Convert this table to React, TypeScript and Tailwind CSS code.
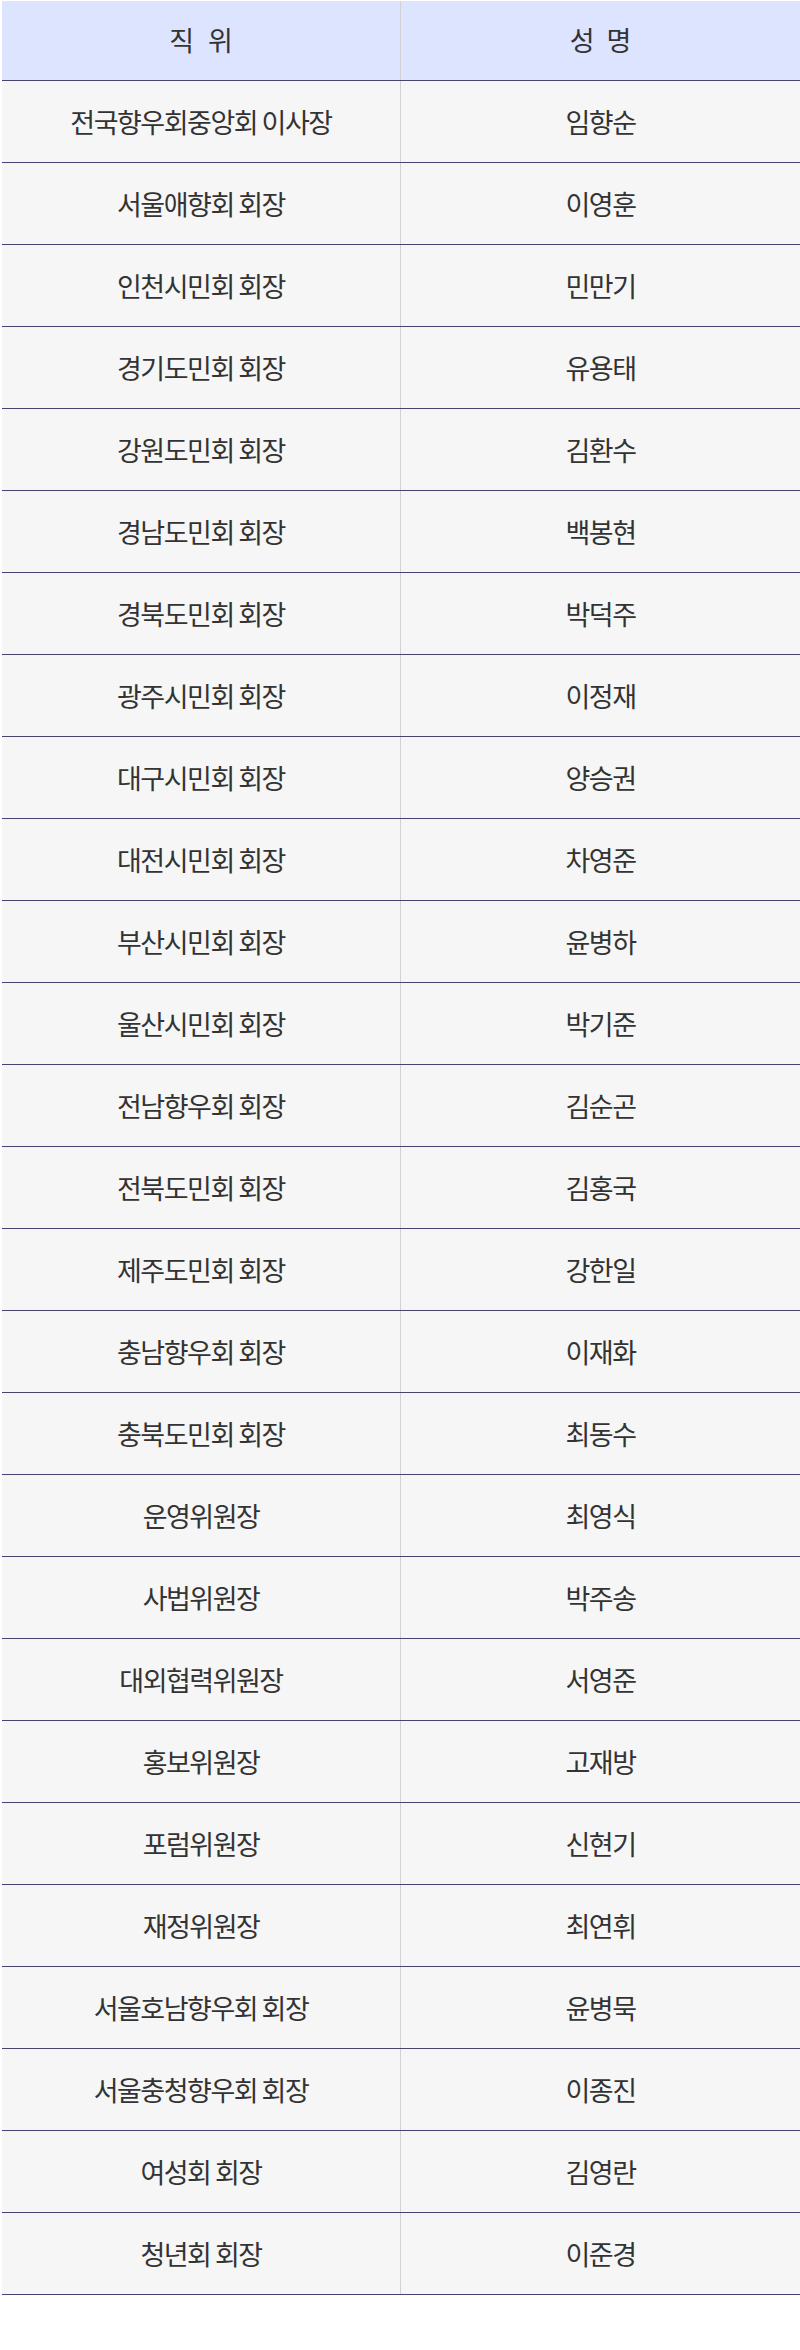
import React from "react";

const rows: [string, string][] = [
  ["전국향우회중앙회 이사장", "임향순"],
  ["서울애향회 회장", "이영훈"],
  ["인천시민회 회장", "민만기"],
  ["경기도민회 회장", "유용태"],
  ["강원도민회 회장", "김환수"],
  ["경남도민회 회장", "백봉현"],
  ["경북도민회 회장", "박덕주"],
  ["광주시민회 회장", "이정재"],
  ["대구시민회 회장", "양승권"],
  ["대전시민회 회장", "차영준"],
  ["부산시민회 회장", "윤병하"],
  ["울산시민회 회장", "박기준"],
  ["전남향우회 회장", "김순곤"],
  ["전북도민회 회장", "김홍국"],
  ["제주도민회 회장", "강한일"],
  ["충남향우회 회장", "이재화"],
  ["충북도민회 회장", "최동수"],
  ["운영위원장", "최영식"],
  ["사법위원장", "박주송"],
  ["대외협력위원장", "서영준"],
  ["홍보위원장", "고재방"],
  ["포럼위원장", "신현기"],
  ["재정위원장", "최연휘"],
  ["서울호남향우회 회장", "윤병묵"],
  ["서울충청향우회 회장", "이종진"],
  ["여성회 회장", "김영란"],
  ["청년회 회장", "이준경"],
];

export default function App() {
  return (
    <div
      className="w-[800px] h-[2350px] bg-white pl-[2px] pt-[1px] text-[#333]"
      style={{ fontFamily: '"Noto Sans CJK KR", "Noto Sans", sans-serif' }}
    >
      <div className="grid grid-cols-[399px_399px] h-[80px] bg-[#dde4ff] border-b border-[#4b4070]">
        <div className="flex items-center justify-center text-[27px] tracking-[4px] pl-[4px] border-r border-[#d2d2d2]">직 위</div>
        <div className="flex items-center justify-center text-[27px] tracking-[3px] pl-[3px]">성 명</div>
      </div>
      {rows.map(([a, b], i) => (
        <div key={i} className="grid grid-cols-[399px_399px] h-[82px] bg-[#f6f6f6] border-b border-[#4b4070]">
          <div className="flex items-center justify-center pt-[1px] text-[27px] tracking-[-1.5px] border-r border-[#d2d2d2]">{a}</div>
          <div className="flex items-center justify-center pt-[1px] text-[27px] tracking-[-1.5px]">{b}</div>
        </div>
      ))}
    </div>
  );
}
